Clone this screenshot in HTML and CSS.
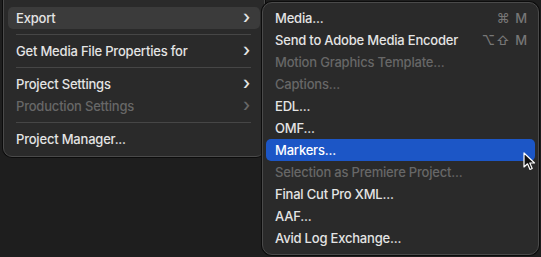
FILE: index.html
```html
<!DOCTYPE html>
<html lang="en">
<head>
    <meta charset="UTF-8">
    <title>Export menu</title>
    <link rel="stylesheet" href="styles.css">
</head>
<body>

<div class="desktop">
    <div class="menu main-menu">
        <div class="item active"><span>Export</span><span class="chevron">&#8250;</span></div>
        <div class="sep"></div>
        <div class="item"><span>Get Media File Properties for</span><span class="chevron">&#8250;</span></div>
        <div class="sep"></div>
        <div class="item"><span>Project Settings</span><span class="chevron">&#8250;</span></div>
        <div class="item disabled"><span>Production Settings</span><span class="chevron">&#8250;</span></div>
        <div class="sep"></div>
        <div class="item"><span>Project Manager...</span></div>
    </div>

    <div class="menu sub-menu">
        <div class="item"><span>Media...</span><span class="key">&#8984; M</span></div>
        <div class="item"><span>Send to Adobe Media Encoder</span><span class="key">&#8997;&#8679; M</span></div>
        <div class="item disabled"><span>Motion Graphics Template...</span></div>
        <div class="item disabled"><span>Captions...</span></div>
        <div class="item"><span>EDL...</span></div>
        <div class="item"><span>OMF...</span></div>
        <div class="item selected"><span>Markers...</span></div>
        <div class="item disabled"><span>Selection as Premiere Project...</span></div>
        <div class="item"><span>Final Cut Pro XML...</span></div>
        <div class="item"><span>AAF...</span></div>
        <div class="item"><span>Avid Log Exchange...</span></div>

        <svg class="cursor" width="14" height="20" viewBox="0 0 14 20">
            <path d="M1 1 L1 15 L4.5 11.8 L7 17.5 L9.2 16.5 L6.8 11 L11.5 11 Z" fill="#111" stroke="#fff" stroke-width="1.2" stroke-linejoin="round"/>
        </svg>
    </div>
</div>

</body>
</html>
```

FILE: styles.css
```css
body {
    margin: 0;
    background-color: #1e1e1e;
    font-family: 'Inter', 'Liberation Sans', sans-serif;
    font-size: 13px;
    font-weight: 500;
    letter-spacing: -0.2px;
    color: #e4e4e4;
    overflow: hidden;
}
.desktop {
    display: flex;
    align-items: flex-start;
    width: 541px;
    height: 257px;
    position: relative;
}
.menu {
    background-color: #2a2a2a;
    border: 1px solid #4a4a4a;
    box-shadow: 0 0 0 1px #0c0c0c;
    box-sizing: border-box;
}
.main-menu {
    width: 262px;
    margin-left: 3px;
    margin-top: -4px;
    padding: 10px 4px 6px 4px;
    border-radius: 0 0 9px 9px;
}
.sub-menu {
    position: relative;
    width: 277px;
    margin-left: -3px;
    margin-top: 2px;
    padding: 4px 3px 5px 3px;
    border-radius: 10px;
    z-index: 1;
}
.item {
    display: flex;
    justify-content: space-between;
    align-items: center;
    height: 22px;
    padding: 0 10px 0 8px;
    border-radius: 5px;
    white-space: nowrap;
}
.sub-menu .item {
    padding: 0 7px 0 9px;
}
.item.active {
    background-color: #3b3b3b;
}
.item.selected {
    background-color: #1c56c6;
    color: #ffffff;
}
.item.disabled {
    color: #676767;
}
.chevron {
    font-size: 18px;
    line-height: 18px;
    margin-top: -3px;
}
.key {
    color: #777777;
    letter-spacing: 1px;
}
.sep {
    height: 1px;
    background-color: #464646;
    margin: 5px 9px 5px 8px;
}
.cursor {
    position: absolute;
    left: 260px;
    top: 149px;
}
```
